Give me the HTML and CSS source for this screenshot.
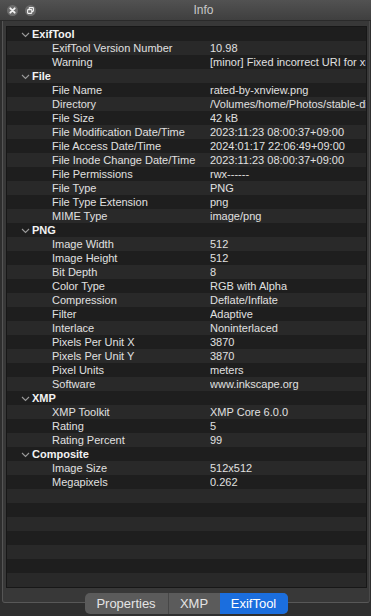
FILE: index.html
```html
<!DOCTYPE html>
<html>
<head>
<meta charset="utf-8">
<link rel="stylesheet" href="styles.css">
</head>
<body>
<div class="window">
  <div class="titlebar">
    <div class="tb-buttons">
      <span class="tb-btn">
        <svg width="11" height="11" viewBox="0 0 11 11"><circle cx="5.5" cy="5.5" r="5.5" fill="#6c6c6c"/><path d="M3.3 3.3 L7.7 7.7 M7.7 3.3 L3.3 7.7" stroke="#f2f2f2" stroke-width="1.8" stroke-linecap="round"/></svg>
      </span>
      <span class="tb-btn">
        <svg width="11" height="11" viewBox="0 0 11 11"><circle cx="5.5" cy="5.5" r="5.5" fill="#6c6c6c"/><rect x="4.2" y="2.6" width="4.2" height="3.8" rx="0.6" fill="none" stroke="#f2f2f2" stroke-width="1.1"/><rect x="2.6" y="4.6" width="4.2" height="3.8" rx="0.6" fill="#6c6c6c" stroke="#f2f2f2" stroke-width="1.1"/></svg>
      </span>
    </div>
    <div class="tb-title">Info</div>
  </div>
  <div class="frame">
    <div class="table">
      <div class="row group"><span class="chev"><svg width="9" height="6" viewBox="0 0 9 6"><path d="M1 1 L4.5 4.5 L8 1" fill="none" stroke="#9a9a9a" stroke-width="1.1"/></svg></span><span class="gname">ExifTool</span></div>
      <div class="row"><span class="key">ExifTool Version Number</span><span class="val">10.98</span></div>
      <div class="row"><span class="key">Warning</span><span class="val">[minor] Fixed incorrect URI for xmlns:MicrosoftPhoto</span></div>
      <div class="row group"><span class="chev"><svg width="9" height="6" viewBox="0 0 9 6"><path d="M1 1 L4.5 4.5 L8 1" fill="none" stroke="#9a9a9a" stroke-width="1.1"/></svg></span><span class="gname">File</span></div>
      <div class="row"><span class="key">File Name</span><span class="val">rated-by-xnview.png</span></div>
      <div class="row"><span class="key">Directory</span><span class="val">/Volumes/home/Photos/stable-diffusion</span></div>
      <div class="row"><span class="key">File Size</span><span class="val">42 kB</span></div>
      <div class="row"><span class="key">File Modification Date/Time</span><span class="val">2023:11:23 08:00:37+09:00</span></div>
      <div class="row"><span class="key">File Access Date/Time</span><span class="val">2024:01:17 22:06:49+09:00</span></div>
      <div class="row"><span class="key">File Inode Change Date/Time</span><span class="val">2023:11:23 08:00:37+09:00</span></div>
      <div class="row"><span class="key">File Permissions</span><span class="val">rwx------</span></div>
      <div class="row"><span class="key">File Type</span><span class="val">PNG</span></div>
      <div class="row"><span class="key">File Type Extension</span><span class="val">png</span></div>
      <div class="row"><span class="key">MIME Type</span><span class="val">image/png</span></div>
      <div class="row group"><span class="chev"><svg width="9" height="6" viewBox="0 0 9 6"><path d="M1 1 L4.5 4.5 L8 1" fill="none" stroke="#9a9a9a" stroke-width="1.1"/></svg></span><span class="gname">PNG</span></div>
      <div class="row"><span class="key">Image Width</span><span class="val">512</span></div>
      <div class="row"><span class="key">Image Height</span><span class="val">512</span></div>
      <div class="row"><span class="key">Bit Depth</span><span class="val">8</span></div>
      <div class="row"><span class="key">Color Type</span><span class="val">RGB with Alpha</span></div>
      <div class="row"><span class="key">Compression</span><span class="val">Deflate/Inflate</span></div>
      <div class="row"><span class="key">Filter</span><span class="val">Adaptive</span></div>
      <div class="row"><span class="key">Interlace</span><span class="val">Noninterlaced</span></div>
      <div class="row"><span class="key">Pixels Per Unit X</span><span class="val">3870</span></div>
      <div class="row"><span class="key">Pixels Per Unit Y</span><span class="val">3870</span></div>
      <div class="row"><span class="key">Pixel Units</span><span class="val">meters</span></div>
      <div class="row"><span class="key">Software</span><span class="val">www.inkscape.org</span></div>
      <div class="row group"><span class="chev"><svg width="9" height="6" viewBox="0 0 9 6"><path d="M1 1 L4.5 4.5 L8 1" fill="none" stroke="#9a9a9a" stroke-width="1.1"/></svg></span><span class="gname">XMP</span></div>
      <div class="row"><span class="key">XMP Toolkit</span><span class="val">XMP Core 6.0.0</span></div>
      <div class="row"><span class="key">Rating</span><span class="val">5</span></div>
      <div class="row"><span class="key">Rating Percent</span><span class="val">99</span></div>
      <div class="row group"><span class="chev"><svg width="9" height="6" viewBox="0 0 9 6"><path d="M1 1 L4.5 4.5 L8 1" fill="none" stroke="#9a9a9a" stroke-width="1.1"/></svg></span><span class="gname">Composite</span></div>
      <div class="row"><span class="key">Image Size</span><span class="val">512x512</span></div>
      <div class="row"><span class="key">Megapixels</span><span class="val">0.262</span></div>
      <div class="row"></div>
      <div class="row"></div>
      <div class="row"></div>
      <div class="row"></div>
      <div class="row"></div>
      <div class="row"></div>
      <div class="row"></div>
    </div>
  </div>
  <div class="footer">
    <div class="segmented">
      <span class="seg seg-props">Properties</span>
      <span class="seg seg-xmp">XMP</span>
      <span class="seg seg-exif active">ExifTool</span>
    </div>
  </div>
</div>
</body>
</html>
```

FILE: styles.css
```css
html, body {
  margin: 0;
  padding: 0;
}
body {
  width: 371px;
  height: 616px;
  overflow: hidden;
  background: #2e2e2e;
  font-family: "Liberation Sans", Arial, sans-serif;
}
.window {
  display: flex;
  flex-direction: column;
  height: 616px;
}
.titlebar {
  height: 21px;
  flex: none;
  display: flex;
  align-items: center;
  background: linear-gradient(#525252, #3f3f3f);
  border-bottom: 1px solid #2a2a2a;
  box-sizing: border-box;
}
.tb-buttons {
  display: flex;
  gap: 7px;
  padding-left: 7px;
}
.tb-btn {
  display: flex;
  width: 11px;
  height: 11px;
}
.tb-title {
  flex: 1;
  text-align: center;
  color: #c8c8c8;
  font-size: 12px;
}
.frame {
  flex: none;
  height: 582px;
  margin-left: 2px;
  margin-right: 1px;
  border-left: 1px solid #555;
  border-right: 1px solid #4a4a4a;
  border-bottom: 1px solid #585858;
  border-bottom-left-radius: 3px;
  border-bottom-right-radius: 3px;
  background: #383838;
  padding: 5px 0 0 3px;
  box-sizing: border-box;
}
.table {
  width: 361px;
  height: 562px;
  box-sizing: border-box;
  border: 1px solid #171717;
  overflow: hidden;
  background: #1e1e1e;
}
.row {
  height: 14px;
  display: grid;
  grid-template-columns: 203px 1fr;
  align-items: center;
  font-size: 11px;
  line-height: 14px;
  color: #e0e0e0;
  white-space: nowrap;
  background: #1e1e1e;
}
.row:nth-child(even) {
  background: #292929;
}
.row.group {
  grid-template-columns: 25px 1fr;
}
.chev {
  display: flex;
  justify-content: flex-end;
  padding-right: 2px;
  padding-top: 1px;
}
.gname {
  font-weight: bold;
  color: #f2f2f2;
}
.key {
  padding-left: 45px;
  overflow: hidden;
}
.val {
  overflow: hidden;
}
.footer {
  flex: 1;
  display: flex;
  justify-content: center;
  background: #2f2f2f;
}
.segmented {
  display: flex;
  height: 21px;
  margin-top: -10px;
  margin-left: 1px;
  border-radius: 5px;
  overflow: hidden;
  background: #5b5b5b;
  font-size: 13px;
  line-height: 21px;
}
.seg {
  color: #e4e4e4;
  text-align: center;
  box-sizing: border-box;
}
.seg-props {
  width: 83px;
}
.seg-xmp {
  width: 52px;
  border-left: 1px solid #474747;
}
.seg-exif {
  width: 68px;
}
.seg.active {
  background: #1b6ede;
  color: #fff;
}
```
